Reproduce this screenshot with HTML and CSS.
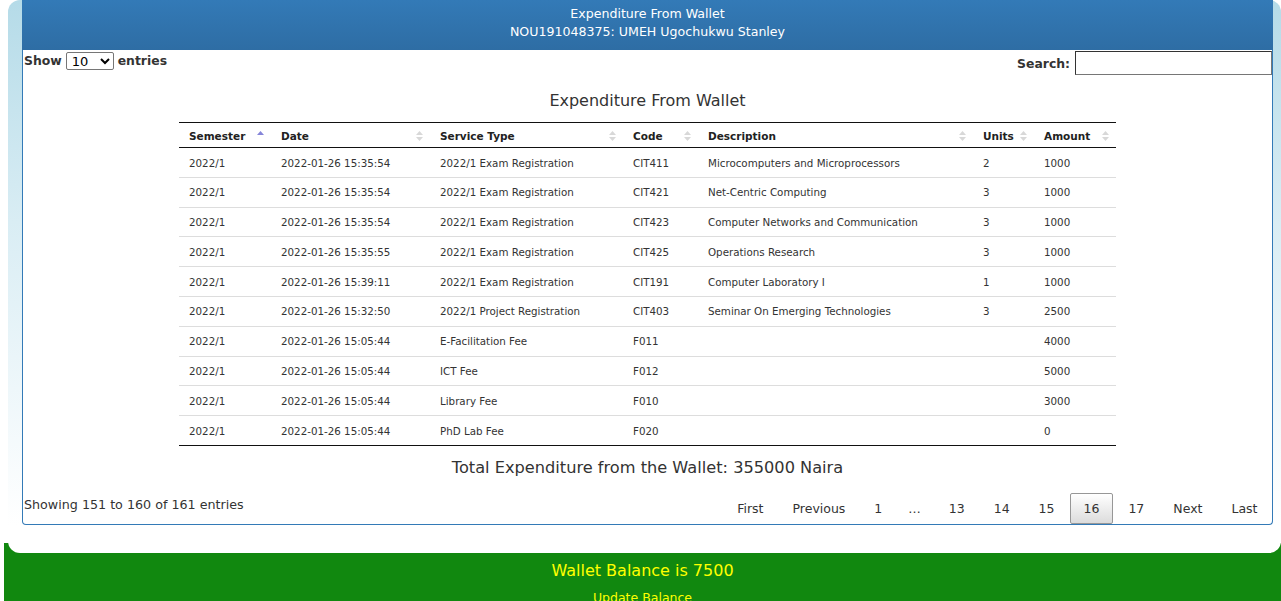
FILE: index.html
```html
<!DOCTYPE html>
<html lang="en">
<head>
<meta charset="utf-8">
<title>Expenditure From Wallet</title>
<link rel="stylesheet" href="styles.css">
</head>
<body>
<div class="shell">
  <div class="panel">
    <div class="panel-head">
      <div>Expenditure From Wallet</div>
      <div>NOU191048375: UMEH Ugochukwu Stanley</div>
    </div>
    <div class="controls">
      <label class="length">Show <select class="len-select"><option>10</option><option>25</option><option>50</option><option>100</option></select> entries</label>
      <label class="filter">Search: <input class="search" type="search"></label>
    </div>
    <table class="dt">
      <caption>Expenditure From Wallet</caption>
      <colgroup>
        <col class="c1"><col class="c2"><col class="c3"><col class="c4"><col class="c5"><col class="c6"><col class="c7">
      </colgroup>
      <thead>
        <tr>
          <th><div class="th-in"><span>Semester</span><svg class="sort" width="7" height="12" viewBox="0 0 7 12"><path class="asc" d="M3.5 1 L7 5 L0 5 Z"/></svg></div></th>
          <th><div class="th-in"><span>Date</span><svg class="sort" width="7" height="12" viewBox="0 0 7 12"><path d="M3.5 1 L7 5 L0 5 Z M0 7 L7 7 L3.5 11 Z"/></svg></div></th>
          <th><div class="th-in"><span>Service Type</span><svg class="sort" width="7" height="12" viewBox="0 0 7 12"><path d="M3.5 1 L7 5 L0 5 Z M0 7 L7 7 L3.5 11 Z"/></svg></div></th>
          <th><div class="th-in"><span>Code</span><svg class="sort" width="7" height="12" viewBox="0 0 7 12"><path d="M3.5 1 L7 5 L0 5 Z M0 7 L7 7 L3.5 11 Z"/></svg></div></th>
          <th><div class="th-in"><span>Description</span><svg class="sort" width="7" height="12" viewBox="0 0 7 12"><path d="M3.5 1 L7 5 L0 5 Z M0 7 L7 7 L3.5 11 Z"/></svg></div></th>
          <th><div class="th-in"><span>Units</span><svg class="sort" width="7" height="12" viewBox="0 0 7 12"><path d="M3.5 1 L7 5 L0 5 Z M0 7 L7 7 L3.5 11 Z"/></svg></div></th>
          <th><div class="th-in"><span>Amount</span><svg class="sort" width="7" height="12" viewBox="0 0 7 12"><path d="M3.5 1 L7 5 L0 5 Z M0 7 L7 7 L3.5 11 Z"/></svg></div></th>
        </tr>
      </thead>
      <tbody>
        <tr><td>2022/1</td><td>2022-01-26 15:35:54</td><td>2022/1 Exam Registration</td><td>CIT411</td><td>Microcomputers and Microprocessors</td><td>2</td><td>1000</td></tr>
        <tr><td>2022/1</td><td>2022-01-26 15:35:54</td><td>2022/1 Exam Registration</td><td>CIT421</td><td>Net-Centric Computing</td><td>3</td><td>1000</td></tr>
        <tr><td>2022/1</td><td>2022-01-26 15:35:54</td><td>2022/1 Exam Registration</td><td>CIT423</td><td>Computer Networks and Communication</td><td>3</td><td>1000</td></tr>
        <tr><td>2022/1</td><td>2022-01-26 15:35:55</td><td>2022/1 Exam Registration</td><td>CIT425</td><td>Operations Research</td><td>3</td><td>1000</td></tr>
        <tr><td>2022/1</td><td>2022-01-26 15:39:11</td><td>2022/1 Exam Registration</td><td>CIT191</td><td>Computer Laboratory I</td><td>1</td><td>1000</td></tr>
        <tr><td>2022/1</td><td>2022-01-26 15:32:50</td><td>2022/1 Project Registration</td><td>CIT403</td><td>Seminar On Emerging Technologies</td><td>3</td><td>2500</td></tr>
        <tr><td>2022/1</td><td>2022-01-26 15:05:44</td><td>E-Facilitation Fee</td><td>F011</td><td></td><td></td><td>4000</td></tr>
        <tr><td>2022/1</td><td>2022-01-26 15:05:44</td><td>ICT Fee</td><td>F012</td><td></td><td></td><td>5000</td></tr>
        <tr><td>2022/1</td><td>2022-01-26 15:05:44</td><td>Library Fee</td><td>F010</td><td></td><td></td><td>3000</td></tr>
        <tr><td>2022/1</td><td>2022-01-26 15:05:44</td><td>PhD Lab Fee</td><td>F020</td><td></td><td></td><td>0</td></tr>
      </tbody>
    </table>
    <div class="total">Total Expenditure from the Wallet: 355000 Naira</div>
    <div class="dt-foot">
      <div class="info">Showing 151 to 160 of 161 entries</div>
      <div class="paging">
        <a class="pg">First</a>
        <a class="pg">Previous</a>
        <a class="pg">1</a>
        <span class="ellipsis">…</span>
        <a class="pg">13</a>
        <a class="pg">14</a>
        <a class="pg">15</a>
        <a class="pg current">16</a>
        <a class="pg">17</a>
        <a class="pg">Next</a>
        <a class="pg">Last</a>
      </div>
    </div>
  </div>
</div>
<div class="wallet">
  <div class="balance">Wallet Balance is 7500</div>
  <div class="update">Update Balance</div>
</div>
</body>
</html>
```
FILE: styles.css
```css
html, body {
  margin: 0;
  padding: 0;
  background: #fff;
  font-family: "DejaVu Sans", Verdana, sans-serif;
  color: #333;
}

.shell {
  position: relative;
  z-index: 1;
  margin-left: 8px;
  padding: 0 8px 28px 14px;
  border-radius: 12px;
  background: linear-gradient(to bottom, #b5dbe8 0%, #d9edf4 40%, #ffffff 95%);
}

.panel {
  background: #fff;
  border: 1px solid #337ab7;
  border-top: 0;
  border-radius: 0 0 4px 4px;
}

.panel-head {
  height: 50px;
  box-sizing: border-box;
  padding-top: 4.5px;
  margin: 0 -1px;
  background: linear-gradient(to bottom, #337ab7 0%, #2e6da4 100%);
  color: #fff;
  text-align: center;
  font-size: 12.6px;
  line-height: 18.5px;
}

.controls {
  display: flex;
  justify-content: space-between;
  align-items: flex-start;
  margin-top: 1px;
  padding-left: 1px;
  height: 24px;
}

.length {
  font-weight: bold;
  font-size: 12.4px;
  line-height: 18px;
  display: flex;
  align-items: center;
  gap: 4px;
  color: #333;
  padding-top: 1px;
}

.len-select {
  width: 48px;
  height: 18px;
  font-family: "DejaVu Sans", Verdana, sans-serif;
  font-size: 13px;
  border: 1px solid #767676;
  border-radius: 2px;
  padding: 0 0 0 1px;
  background: #fff;
  color: #000;
}

.filter {
  font-weight: bold;
  font-size: 12.4px;
  display: flex;
  align-items: center;
  gap: 5px;
  height: 24px;
  color: #333;
}

.search {
  width: 197px;
  height: 24px;
  box-sizing: border-box;
  border: 1px solid #767676;
  border-top-color: #333;
  border-left-color: #333;
  border-radius: 0;
  padding: 0 2px;
  margin: 0;
}

.dt {
  width: 937px;
  margin: 16px auto 0;
  border-collapse: separate;
  border-spacing: 0;
  table-layout: fixed;
}

.dt caption {
  font-size: 16px;
  line-height: 20px;
  padding-bottom: 11px;
  color: #333;
}

.c1 { width: 92px; }
.c2 { width: 159px; }
.c3 { width: 193px; }
.c4 { width: 75px; }
.c5 { width: 275px; }
.c6 { width: 61px; }
.c7 { width: 82px; }

.dt thead th {
  border-top: 1px solid #111;
  border-bottom: 1px solid #111;
  padding: 7px 7px 5px 10px;
  font-size: 10.5px;
  line-height: 12px;
  font-weight: bold;
  text-align: left;
  color: #222;
}

.th-in {
  display: flex;
  justify-content: space-between;
  align-items: center;
}

.sort {
  display: block;
  fill: #d8d8d8;
  flex: none;
}

.sort .asc {
  fill: #8585d9;
}

.dt tbody td {
  padding: 8.5px 10px 7.5px;
  font-size: 10.3px;
  line-height: 12.8px;
  color: #333;
  border-top: 1px solid #ddd;
  white-space: nowrap;
  overflow: hidden;
}

.dt tbody tr:first-child td {
  border-top: 0;
}

.dt tbody tr:last-child td {
  border-bottom: 1px solid #111;
}

.total {
  text-align: center;
  font-size: 16.2px;
  line-height: 20px;
  margin-top: 12px;
  color: #333;
}

.dt-foot {
  display: flex;
  justify-content: space-between;
  align-items: flex-start;
  margin-top: 15px;
  padding: 0 1px;
}

.info {
  font-size: 12.7px;
  line-height: 16px;
  padding-top: 4px;
  color: #333;
}

.paging {
  display: flex;
  align-items: center;
}

.pg {
  display: block;
  margin-left: 2px;
  padding: 6px 12.5px;
  border: 1px solid transparent;
  border-radius: 2px;
  font-size: 12.5px;
  line-height: 17px;
  color: #333;
}

.pg.current {
  border-color: #979797;
  background: linear-gradient(to bottom, #ffffff 0%, #dcdcdc 100%);
}

.ellipsis {
  padding: 0 12.5px;
  font-size: 12.5px;
  line-height: 17px;
  color: #333;
}

.wallet {
  margin-left: 4px;
  margin-top: -10px;
  padding: 16px 0 10px;
  background: #11880f;
  text-align: center;
  color: #ffff00;
}

.balance {
  font-size: 16px;
  line-height: 24px;
  padding-top: 0;
}

.update {
  font-size: 12.5px;
  line-height: 18px;
  margin-top: 6px;
}
```
